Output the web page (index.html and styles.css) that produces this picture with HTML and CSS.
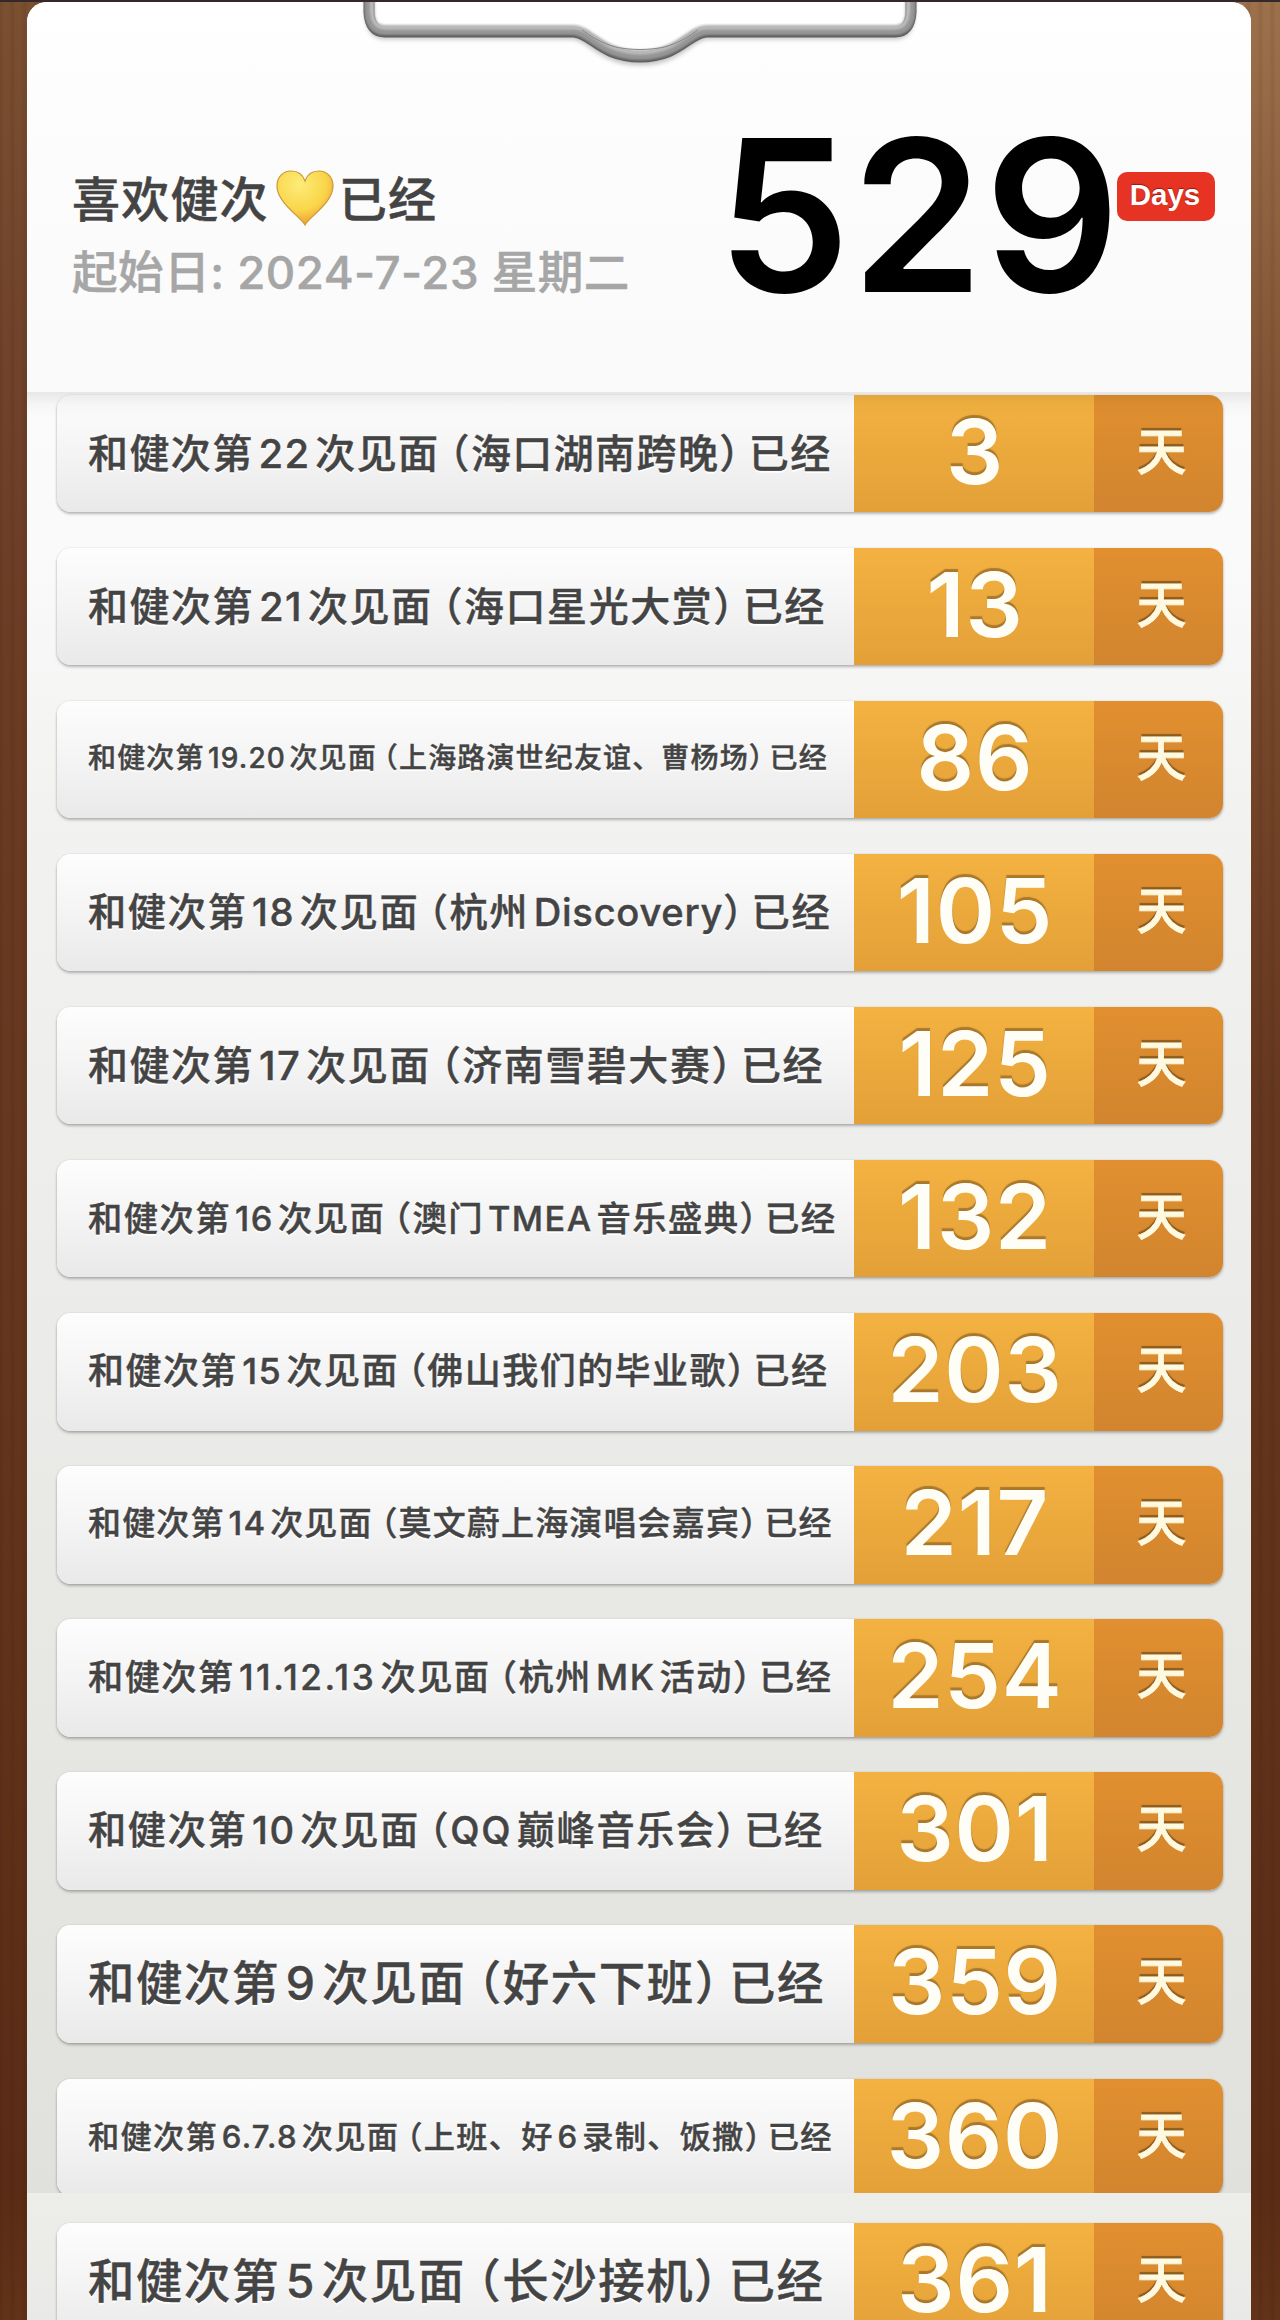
FILE: index.html
```html
<!DOCTYPE html>
<html lang="zh-CN">
<head>
<meta charset="utf-8">
<title>倒数日</title>
<link rel="stylesheet" href="styles.css">
</head>
<body>
<main class="paper">
  <svg class="clip" viewBox="0 0 560 76" width="560" height="76" aria-hidden="true">
    <defs>
      <filter id="soft" x="-5%" y="-20%" width="110%" height="150%"><feGaussianBlur stdDeviation="2"/></filter>
      <filter id="smooth" x="-5%" y="-20%" width="110%" height="150%"><feGaussianBlur stdDeviation=".8"/></filter>
    </defs>
    <g fill="none" stroke-linejoin="round">
      <path d="M9 -5V16Q10 36 25 36H211C229 36 240 62 280 62C320 62 331 36 349 36H535Q550 36 551 16V-5" stroke="#000" stroke-opacity=".22" stroke-width="7" filter="url(#soft)"/>
      <path d="M9 -5V12Q10 32 25 32H213C231 32 240 57 280 57C320 57 329 32 347 32H535Q550 32 551 12V-5" stroke="#5c5c5c" stroke-width="11"/>
      <g filter="url(#smooth)">
        <path d="M9.500 -5V11Q10 30 25 30H213C231 30 240 55 280 55C320 55 329 30 347 30H535Q550 30 550.500 11V-5" stroke="#959595" stroke-width="10"/>
        <path d="M12 -5V11Q13 27.500 25 27.500H214C232 27.500 242 52.500 280 52.500C318 52.500 328 27.500 346 27.500H535Q547 27.500 548 11V-5" stroke="#bdbdbd" stroke-width="4"/>
      </g>
      <path d="M222 30C236 39 248 49.500 280 49.500C312 49.500 324 39 338 30" stroke="#858585" stroke-width="1"/>
    </g>
  </svg>
  <header class="hero">
    <div class="about">
      <h1 class="title">喜欢健次<svg class="heart" viewBox="0 0 58 56" width="58" height="56" aria-hidden="true">
        <defs><radialGradient id="gold" cx=".4" cy=".25" r=".8"><stop offset="0" stop-color="#fdec78"/><stop offset=".6" stop-color="#fad54a"/><stop offset="1" stop-color="#e9962c"/></radialGradient></defs>
        <path d="M29 55C25 47 1 33 1 16C1 7 7 1 15 1C22 1 27 5 29 11C31 5 36 1 43 1C51 1 57 7 57 16C57 33 33 47 29 55Z" fill="url(#gold)" stroke="#c99a3b" stroke-width="1.2"/>
      </svg>已经</h1>
      <p class="since">起始日: 2024-7-23 星期二</p>
    </div>
    <div class="total">529</div>
    <div class="badge">Days</div>
  </header>
  <ul class="list">
    <li class="row"><p class="label s39">和健次第<b>22</b>次见面<i>（</i>海口湖南跨晚<u>）</u>已经</p><div class="count">3</div><div class="unit">天</div></li>
    <li class="row"><p class="label s40">和健次第<b>21</b>次见面<i>（</i>海口星光大赏<u>）</u>已经</p><div class="count">13</div><div class="unit">天</div></li>
    <li class="row"><p class="label s28">和健次第<b>19.20</b>次见面<i>（</i>上海路演世纪友谊、曹杨场<u>）</u>已经</p><div class="count">86</div><div class="unit">天</div></li>
    <li class="row"><p class="label s38">和健次第<b>18</b>次见面<i>（</i>杭州<b class="end word">Discovery</b><u>）</u>已经</p><div class="count">105</div><div class="unit">天</div></li>
    <li class="row"><p class="label s40">和健次第<b>17</b>次见面<i>（</i>济南雪碧大赛<u>）</u>已经</p><div class="count">125</div><div class="unit">天</div></li>
    <li class="row"><p class="label s34">和健次第<b>16</b>次见面<i>（</i>澳门<b>TMEA</b>音乐盛典<u>）</u>已经</p><div class="count">132</div><div class="unit">天</div></li>
    <li class="row"><p class="label s36">和健次第<b>15</b>次见面<i>（</i>佛山我们的毕业歌<u>）</u>已经</p><div class="count">203</div><div class="unit">天</div></li>
    <li class="row"><p class="label s33">和健次第<b>14</b>次见面<i>（</i>莫文蔚上海演唱会嘉宾<u>）</u>已经</p><div class="count">217</div><div class="unit">天</div></li>
    <li class="row"><p class="label s35">和健次第<b class="wide">11.12.13</b>次见面<i>（</i>杭州<b>MK</b>活动<u>）</u>已经</p><div class="count">254</div><div class="unit">天</div></li>
    <li class="row"><p class="label s38">和健次第<b>10</b>次见面<i>（</i><b class="start">QQ</b>巅峰音乐会<u>）</u>已经</p><div class="count">301</div><div class="unit">天</div></li>
    <li class="row"><p class="label s46">和健次第<b>9</b>次见面<i>（</i>好六下班<u>）</u>已经</p><div class="count">359</div><div class="unit">天</div></li>
    <li class="row"><p class="label s31">和健次第<b>6.7.8</b>次见面<i>（</i>上班、好<b>6</b>录制、饭撒<u>）</u>已经</p><div class="count">360</div><div class="unit">天</div></li>
  </ul>
  <ul class="list next">
    <li class="row"><p class="label s46">和健次第<b>5</b>次见面<i>（</i>长沙接机<u>）</u>已经</p><div class="count">361</div><div class="unit">天</div></li>
  </ul>
</main>
</body>
</html>
```
FILE: styles.css
```css
* { box-sizing: border-box; margin: 0; padding: 0; }
html { height: 2320px; overflow: hidden; }
body {
  height: 2320px;
  padding: 2px 29px 0 27px;
  overflow: hidden;
  font-family: Inter, "Noto Sans CJK SC", sans-serif;
  font-weight: 500;
  color: #444;
  background:
    linear-gradient(#33282a, #33282a) top / 100% 2px no-repeat,
    repeating-linear-gradient(90deg, rgba(0,0,0,.06) 0 2px, transparent 3px 9px, rgba(0,0,0,.05) 11px 12px),
    linear-gradient(rgba(190,145,100,.5), rgba(170,125,80,.3) 400px, rgba(150,100,60,0)) right top / 60px 1100px no-repeat,
    linear-gradient(#7b5031 0, #70432a 350px, #6b3b22 700px, #65371e 1200px, #5b2c15 2190px, #623318 2320px);
}
.paper {
  position: relative;
  height: 2318px;
  overflow: hidden;
  border-radius: 20px 20px 0 0;
  background: linear-gradient(#fdfdfd 0, #fafafa 550px, #f2f2f1 800px, #e0e0dc 2190px);
}
.clip { position: absolute; left: 333px; top: -2px; }
.hero {
  display: flex;
  height: 390px;
  padding-left: 45px;
  background: linear-gradient(#fff, #fcfcfc 140px, #fafafa);
}
.about { width: 645px; padding-top: 159px; -webkit-text-stroke: .5px; }
.title { display: flex; align-items: center; height: 70px; font-size: 48px; font-weight: 500; letter-spacing: 1.200px; white-space: nowrap; }
.heart { position: relative; top: 2px; margin: 0 5px 0 7px; -webkit-text-stroke: 0; }
.since { height: 70px; margin-top: 6px; line-height: 72px; font-size: 45.600px; color: #a6a6a6; font-weight: 500; white-space: nowrap; letter-spacing: .5px; }
.total { width: 391px; padding-top: 88px; font-size: 212px; line-height: 250px; color: #000; font-weight: 600; letter-spacing: 1px; text-align: right; white-space: nowrap; }
.badge {
  width: 98px; height: 49px; margin: 170px 0 0 9px;
  padding-right: 2px;
  border-radius: 10px; background: #e63323; color: #fff;
  font: bold 29.500px/45px "Liberation Sans", sans-serif; text-align: center;
  text-shadow: 0 -1px 1px #8d1c12;
}
.list { position: relative; list-style: none; height: 1801px; padding: 2.500px 28px 0 30px; overflow: hidden; }
.list::before {
  content: ""; position: absolute; z-index: 1; inset: 0 0 auto; height: 26px;
  background: linear-gradient(rgba(0,0,0,.08), rgba(0,0,0,.02) 50%, rgba(0,0,0,0));
}
.next::before { display: none; }
.row {
  display: flex; height: 117.500px; margin-bottom: 35.600px;
  border-radius: 14px; overflow: hidden;
  box-shadow: 0 2px 3px rgba(0,0,0,.26), 0 0 2px rgba(0,0,0,.14);
  background: #fff;
}
.next { height: 127px; padding-top: 30px; background: linear-gradient(#ededea, #e9e9e7); }
.label {
  width: 797px; padding-left: 31px;
  line-height: 117px; white-space: nowrap;
  background: linear-gradient(#fdfdfd, #f4f4f4 50%, #e9e9ea);
  text-shadow: 0 2px 1px #fff;
  -webkit-text-stroke: .4px;
}
.label b { font-weight: 500; margin: 0 .12em; }
.label b.end { margin-right: 0; }
.label b.start { margin-left: 0; }
.label b.wide { letter-spacing: 2.500px; }
.label b.word { letter-spacing: .700px; }
.label i, .label u { font-style: normal; text-decoration: none; font-feature-settings: "halt"; }
.label i { margin-left: .25em; }
.label u { margin-right: .2em; }
.s28 { font-size: 28px; letter-spacing: 1.150px; line-height: 115px; }
.s31 { font-size: 31.200px; letter-spacing: 1.300px; }
.s33 { font-size: 33px; letter-spacing: 1.150px; line-height: 115px; }
.s34 { font-size: 34.300px; letter-spacing: 1.450px; }
.s35 { font-size: 35.200px; letter-spacing: 1.500px; }
.s36 { font-size: 36px; letter-spacing: 1.450px; }
.s38 { font-size: 38.200px; letter-spacing: 1.650px; }
.s39 { font-size: 40px; letter-spacing: 1.400px; }
.s40 { font-size: 40px; letter-spacing: 1.520px; }
.s46 { font-size: 46.400px; letter-spacing: 1.650px; }
.count {
  width: 240px; padding-left: 2px; text-align: center; color: #fffef6;
  font-size: 90px; line-height: 114px; font-weight: 600; letter-spacing: .8px;
  background: linear-gradient(#f3b241, #e3a038);
  text-shadow: 0 -3px 1px #a9782b;
}
.unit {
  width: 129px; padding-left: 6px; text-align: center; color: #fff9e0;
  font-size: 50px; line-height: 115px; font-weight: 500;
  background: linear-gradient(#e18f2f, #d2852f);
  text-shadow: 0 -3px 1px #8d5c1d;
  -webkit-text-stroke: .8px;
}
```
